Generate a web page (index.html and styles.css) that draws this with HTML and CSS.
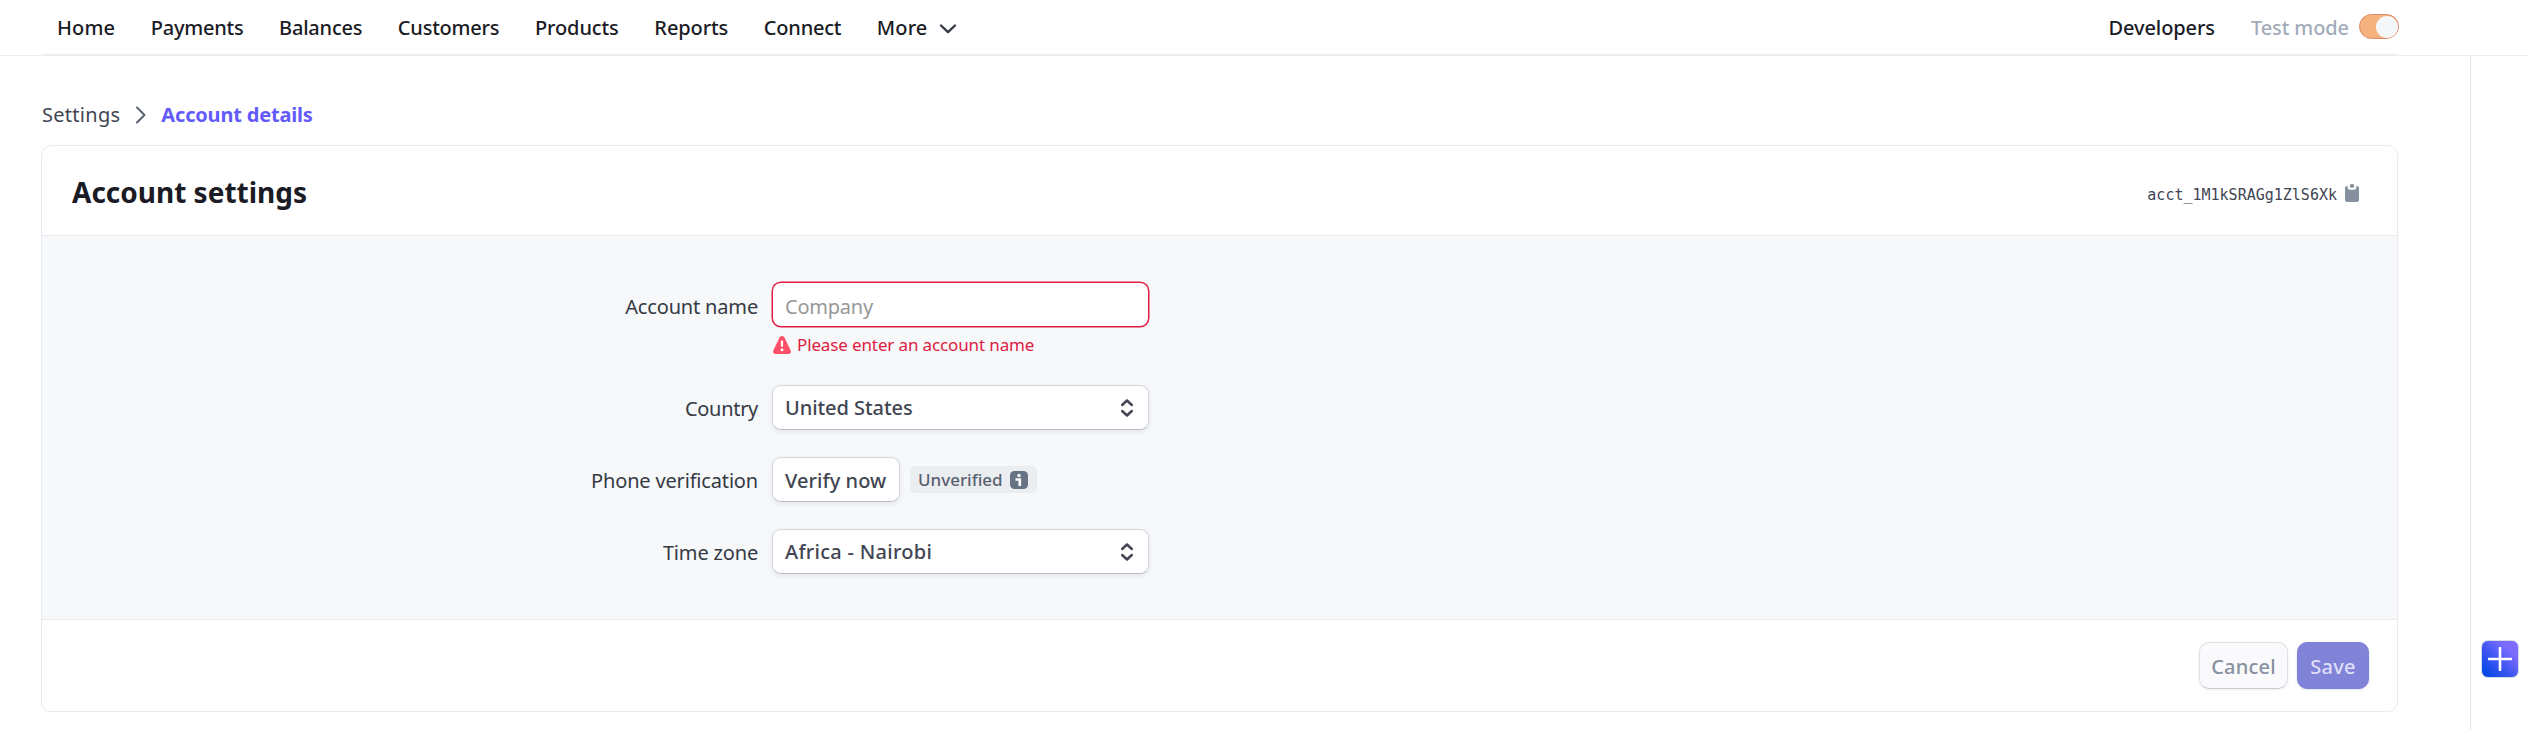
FILE: index.html
```
<!DOCTYPE html>
<html lang="en">
<head>
<meta charset="utf-8">
<title>Account settings</title>
<link rel="stylesheet" href="styles.css">
</head>
<body>
<header class="topbar">
  <div class="topbar-inner">
    <nav class="nav">
      <a class="wide">Home</a>
      <a class="tight">Payments</a>
      <a class="tight">Balances</a>
      <a class="tight">Customers</a>
      <a>Products</a>
      <a>Reports</a>
      <a class="tight">Connect</a>
      <a class="more wide">More
        <svg width="18" height="12" viewBox="0 0 18 12"><path d="M2 2.500 9 9.200 16 2.500"/></svg>
      </a>
    </nav>
    <div class="tools">
      <a>Developers</a>
      <span class="test-mode">Test mode</span>
      <span class="toggle"><span class="knob"></span></span>
    </div>
  </div>
</header>
<div class="body">
  <main class="main">
    <div class="breadcrumb">
      <span class="crumb">Settings</span>
      <svg width="12" height="18" viewBox="0 0 12 18"><path d="M2 1.500 9.500 9 2 16.500"/></svg>
      <span class="crumb-current">Account details</span>
    </div>
    <section class="card">
      <div class="card-head">
        <h1>Account settings</h1>
        <div class="account-id">
          <span>acct_1M1kSRAGg1ZlS6Xk</span>
          <svg width="14" height="18" viewBox="0 0 14 18"><path d="M2 2h.6v1.200C2.600 5 4 5.800 5.500 5.800h3C10 5.800 11.400 5 11.400 3.200V2h.6a2 2 0 0 1 2 2v12a2 2 0 0 1-2 2H2a2 2 0 0 1-2-2V4a2 2 0 0 1 2-2z"/><rect x="4.700" y="0" width="4.600" height="3.700" rx="1.800"/></svg>
        </div>
      </div>
      <div class="form">
        <label class="label first">Account name</label>
        <div class="field">
          <div class="control input invalid">Company</div>
          <div class="error">
            <svg width="18" height="18" viewBox="0 0 18 18"><path class="tri" d="M6.700 1.300Q9-1.200 11.300 1.300L17.500 14Q18.800 18 15.500 18H2.500Q-.8 18 .5 14Z"/><path class="mark" d="M9 5.500v4.300"/><circle class="dot" cx="9" cy="13.700" r="1.500"/></svg>
            <span>Please enter an account name</span>
          </div>
        </div>
        <label class="label country">Country</label>
        <div class="field">
          <div class="control select">United States
            <svg width="14" height="18" viewBox="0 0 14 18"><path d="M2.200 6 7 1.500 11.800 6M2.200 12 7 16.500 11.800 12"/></svg>
          </div>
        </div>
        <label class="label">Phone verification</label>
        <div class="field phone">
          <div class="control verify">Verify now</div>
          <div class="badge">Unverified
            <svg width="18" height="18" viewBox="0 0 18 18"><rect width="18" height="18" rx="4.500"/><path d="M5.500 8.500h4.300v6.500"/><circle cx="9" cy="4.500" r="1.700"/></svg>
          </div>
        </div>
        <label class="label">Time zone</label>
        <div class="field">
          <div class="control select spaced">Africa - Nairobi
            <svg width="14" height="18" viewBox="0 0 14 18"><path d="M2.200 6 7 1.500 11.800 6M2.200 12 7 16.500 11.800 12"/></svg>
          </div>
        </div>
      </div>
      <div class="card-foot">
        <button class="cancel">Cancel</button>
        <button class="save">Save</button>
      </div>
    </section>
  </main>
  <aside class="rail">
    <div class="plus"><svg width="24" height="24" viewBox="0 0 24 24"><path d="M12 1v22M1 12h22"/></svg></div>
  </aside>
</div>
</body>
</html>
```
FILE: styles.css
```
* { box-sizing: border-box; }
body {
  margin: 0;
  height: 730px;
  display: flex;
  flex-direction: column;
  overflow: hidden;
  background: #fff;
  color: #1a1b25;
  font: 20px/28px "Noto Sans", sans-serif;
}
svg { flex: none; fill: none; stroke-linecap: round; stroke-linejoin: round; }

.topbar { height: 56px; border-bottom: 1px solid #ebeef1; padding: 0 131px 0 42px; }
.topbar-inner {
  height: 55px;
  display: flex;
  justify-content: space-between;
  border-bottom: 1px solid #ebeef1;
  line-height: 55px;
  font-weight: 500;
  letter-spacing: -0.1px;
}
.nav { display: flex; gap: 35.600px; padding-left: 15px; }
.nav .tight { letter-spacing: -0.22px; }
.nav .wide { letter-spacing: 0.13px; }
.more { display: flex; align-items: center; gap: 12px; }
.more svg { stroke: #353a44; stroke-width: 2.4; margin-top: 4px; }
.tools { display: flex; align-items: center; }
.test-mode { margin-left: 36px; color: #a3acba; }
.toggle {
  width: 40px;
  height: 25px;
  margin: -1px -1px 0 10px;
  border: 1px solid #dd8a66;
  border-radius: 13px;
  background: #f5b27f;
  display: flex;
  justify-content: flex-end;
  align-items: center;
}
.knob { width: 22px; height: 22px; border-radius: 50%; background: #f5f6f8; }

.body { flex: 1; display: flex; }
.main { flex: 1; padding: 44px 72px 0 41px; }
.breadcrumb { display: flex; align-items: center; height: 28px; padding-left: 1px; color: #414552; }
.breadcrumb svg { stroke: #596171; stroke-width: 2; margin: 2px 14px 0 15px; }
.crumb { padding-top: 1px; letter-spacing: 0.28px; }
.crumb-current { padding-top: 1px; color: #625afa; font-weight: 700; letter-spacing: -0.18px; }

.card { margin-top: 17px; height: 567px; border: 1px solid #e8ebef; border-radius: 10px; display: flex; flex-direction: column; overflow: hidden; }
.card-head { height: 89px; padding: 0 38px 0 30px; display: flex; align-items: center; justify-content: space-between; }
h1 { margin: 3px 0 0; font-size: 28px; line-height: 36px; font-weight: 700; }
.account-id {
  display: flex;
  align-items: center;
  gap: 8px;
  color: #414552;
  font: 15px/20px "DejaVu Sans Mono", monospace;
  padding-top: 8px;
}
.account-id svg { fill: #87909f; margin-bottom: 3px; }

.form {
  flex: 1;
  border-top: 1px solid #e8ebef;
  border-bottom: 1px solid #e8ebef;
  background: #f6f8fa;
  padding-top: 46px;
  display: grid;
  grid-template-columns: 716px 380px;
  grid-template-rows: 103px 72px 72px 45px;
  column-gap: 14px;
  color: #353a44;
}
.label { text-align: right; line-height: 47px; letter-spacing: -0.17px; }
.label.first { line-height: 49px; }
.label.country { letter-spacing: -0.3px; }
.control {
  width: 377px;
  height: 45px;
  padding: 0 14px 0 12px;
  border: 1px solid #d3d6dc;
  border-bottom-color: #babdc4;
  border-radius: 9px;
  background: #fff;
  box-shadow: 0 2px 5px rgba(60, 66, 87, .1);
  color: #414552;
  font-weight: 500;
  line-height: 45px;
}
.input { color: #979797; font-weight: 400; letter-spacing: -0.22px; }
.invalid { border-color: #df1b41; box-shadow: 0 0 0 .5px #df1b41; line-height: 47px; }
.error { display: flex; align-items: center; gap: 6px; padding: 6px 0 0 1px; font-size: 17px; line-height: 24px; letter-spacing: -0.13px; color: #df1b41; }
.tri { fill: #ff4f68; }
.mark { stroke: #fff; stroke-width: 2.2; }
.dot { fill: #fff; }
.select { display: flex; align-items: center; justify-content: space-between; letter-spacing: -0.06px; }
.select svg { stroke: #414552; stroke-width: 2.4; }
.spaced { letter-spacing: 0.28px; }
.phone { display: flex; align-items: flex-start; }
.verify { width: 128px; padding: 0 0 0 12px; letter-spacing: 0.06px; }
.badge {
  margin: 9px 0 0 10px;
  width: 127px;
  height: 27px;
  padding: 0 9px 0 8px;
  display: flex;
  align-items: center;
  justify-content: space-between;
  border-radius: 5px;
  background: #ebeef1;
  color: #596171;
  font-size: 17px;
  font-weight: 500;
  line-height: 27px;
  letter-spacing: 0;
}
.badge svg { fill: #687385; }
.badge path { fill: none; stroke: #fff; stroke-width: 2.6; stroke-linecap: butt; stroke-linejoin: miter; }
.badge circle { fill: #fff; }

.card-foot { height: 91px; display: flex; justify-content: flex-end; gap: 9px; padding: 22px 28px 0; }
button { height: 47px; border-radius: 10px; font: 500 20px/46px "Noto Sans", sans-serif; padding: 1px 0 0; letter-spacing: .2px; }
.cancel { width: 89px; border: 1px solid #dfe1e5; border-bottom-color: #c9cbd0; background: #fafafc; color: #87909f; box-shadow: 0 1px 3px rgba(60, 66, 87, .08); }
.save { width: 72px; border: 1px solid #7d81da; background: #8083d8; color: #dfdff8; box-shadow: 0 1px 3px rgba(60, 66, 87, .12); }

.rail { width: 59px; border-left: 1px solid #e3e7eb; padding: 584px 0 0 10px; }
.plus { width: 38px; height: 38px; border: 1px solid #d5daea; border-radius: 7px; display: flex; align-items: center; justify-content: center; background: linear-gradient(45deg, #0048e5 5%, #4156f2 45%, #7a6cff 75%, #7f6cff); }
.plus path { stroke: #fff; stroke-width: 2.6; }
```
